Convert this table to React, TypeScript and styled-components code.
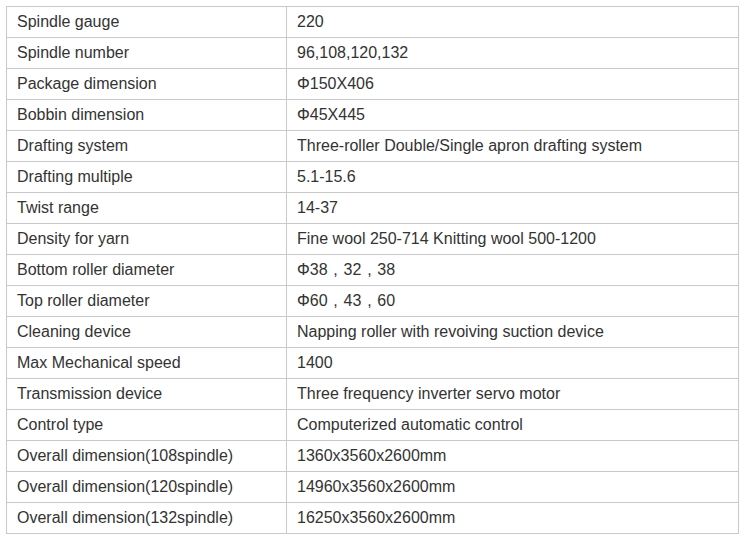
import React from 'react';
import styled, { createGlobalStyle } from 'styled-components';

const GlobalStyle = createGlobalStyle`
  body {
    margin: 0;
    background: #fff;
    font-family: "Liberation Sans", Arial, "Noto Sans CJK SC", sans-serif;
  }
`;

const Wrapper = styled.div`
  padding: 6px 0 0 6px;
`;

const SpecTable = styled.table`
  width: 733px;
  border-collapse: collapse;
  table-layout: fixed;
  color: #333;
  font-size: 16px;
`;

const Cell = styled.td<{ $first?: boolean }>`
  width: ${(p) => (p.$first ? '269px' : 'auto')};
  height: 30px;
  padding: 0 0 0 10px;
  border: 1px solid #c9c9c9;
  line-height: 30px;
  white-space: nowrap;
  vertical-align: middle;
`;

// full-width comma, drawn centred in its em box as in the original page
const WideComma = styled.span`
  display: inline-block;
  width: 16px;
  text-align: center;
`;

const withCommas = (text: string) =>
    text.split('，').map((part, i) => (
        <React.Fragment key={i}>
            {i > 0 && <WideComma>,</WideComma>}
            {part}
        </React.Fragment>
    ));

const specs: [string, string][] = [
    ['Spindle gauge', '220'],
    ['Spindle number', '96,108,120,132'],
    ['Package dimension', 'Φ150X406'],
    ['Bobbin dimension', 'Φ45X445'],
    ['Drafting system', 'Three-roller Double/Single apron drafting system'],
    ['Drafting multiple', '5.1-15.6'],
    ['Twist range', '14-37'],
    ['Density for yarn', 'Fine wool 250-714 Knitting wool 500-1200'],
    ['Bottom roller diameter', 'Φ38，32，38'],
    ['Top roller diameter', 'Φ60，43，60'],
    ['Cleaning device', 'Napping roller with revoiving suction device'],
    ['Max Mechanical speed', '1400'],
    ['Transmission device', 'Three frequency inverter servo motor'],
    ['Control type', 'Computerized automatic control'],
    ['Overall dimension(108spindle)', '1360x3560x2600mm'],
    ['Overall dimension(120spindle)', '14960x3560x2600mm'],
    ['Overall dimension(132spindle)', '16250x3560x2600mm'],
];

const App: React.FC = () => {
    return (
        <Wrapper>
            <GlobalStyle />
            <SpecTable>
                <tbody>
                    {specs.map(([label, value]) => (
                        <tr key={label}>
                            <Cell $first>{label}</Cell>
                            <Cell>{withCommas(value)}</Cell>
                        </tr>
                    ))}
                </tbody>
            </SpecTable>
        </Wrapper>
    );
};

export default App;
